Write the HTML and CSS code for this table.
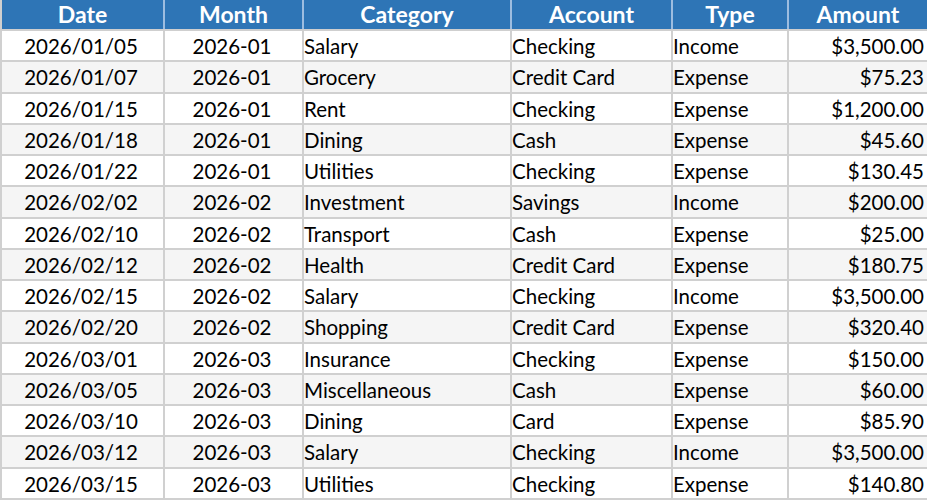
FILE: index.html
```html
<!DOCTYPE html>
<html>
<head>
<meta charset="utf-8">
<link rel="stylesheet" href="styles.css">
</head>
<body>
<table class="ledger">
  <colgroup>
    <col class="c-date"><col class="c-month"><col class="c-cat"><col class="c-acct"><col class="c-type"><col class="c-amt">
  </colgroup>
  <thead>
    <tr><th>Date</th><th>Month</th><th>Category</th><th>Account</th><th>Type</th><th>Amount</th></tr>
  </thead>
  <tbody>
    <tr><td class="ctr">2026/01/05</td><td class="ctr">2026-01</td><td>Salary</td><td>Checking</td><td>Income</td><td class="num">$3,500.00</td></tr>
    <tr><td class="ctr">2026/01/07</td><td class="ctr">2026-01</td><td>Grocery</td><td>Credit Card</td><td>Expense</td><td class="num">$75.23</td></tr>
    <tr><td class="ctr">2026/01/15</td><td class="ctr">2026-01</td><td>Rent</td><td>Checking</td><td>Expense</td><td class="num">$1,200.00</td></tr>
    <tr><td class="ctr">2026/01/18</td><td class="ctr">2026-01</td><td>Dining</td><td>Cash</td><td>Expense</td><td class="num">$45.60</td></tr>
    <tr><td class="ctr">2026/01/22</td><td class="ctr">2026-01</td><td>Utilities</td><td>Checking</td><td>Expense</td><td class="num">$130.45</td></tr>
    <tr><td class="ctr">2026/02/02</td><td class="ctr">2026-02</td><td>Investment</td><td>Savings</td><td>Income</td><td class="num">$200.00</td></tr>
    <tr><td class="ctr">2026/02/10</td><td class="ctr">2026-02</td><td>Transport</td><td>Cash</td><td>Expense</td><td class="num">$25.00</td></tr>
    <tr><td class="ctr">2026/02/12</td><td class="ctr">2026-02</td><td>Health</td><td>Credit Card</td><td>Expense</td><td class="num">$180.75</td></tr>
    <tr><td class="ctr">2026/02/15</td><td class="ctr">2026-02</td><td>Salary</td><td>Checking</td><td>Income</td><td class="num">$3,500.00</td></tr>
    <tr><td class="ctr">2026/02/20</td><td class="ctr">2026-02</td><td>Shopping</td><td>Credit Card</td><td>Expense</td><td class="num">$320.40</td></tr>
    <tr><td class="ctr">2026/03/01</td><td class="ctr">2026-03</td><td>Insurance</td><td>Checking</td><td>Expense</td><td class="num">$150.00</td></tr>
    <tr><td class="ctr">2026/03/05</td><td class="ctr">2026-03</td><td>Miscellaneous</td><td>Cash</td><td>Expense</td><td class="num">$60.00</td></tr>
    <tr><td class="ctr">2026/03/10</td><td class="ctr">2026-03</td><td>Dining</td><td>Card</td><td>Expense</td><td class="num">$85.90</td></tr>
    <tr><td class="ctr">2026/03/12</td><td class="ctr">2026-03</td><td>Salary</td><td>Checking</td><td>Income</td><td class="num">$3,500.00</td></tr>
    <tr><td class="ctr">2026/03/15</td><td class="ctr">2026-03</td><td>Utilities</td><td>Checking</td><td>Expense</td><td class="num">$140.80</td></tr>
  </tbody>
</table>
</body>
</html>
```
FILE: styles.css
```css
html, body {
  margin: 0;
  padding: 0;
  background: #ffffff;
}
.ledger {
  width: 927px;
  border-collapse: collapse;
  table-layout: fixed;
  font-family: Lato, "Liberation Sans", sans-serif;
  font-size: 20.5px;
  color: #000000;
}
.c-date { width: 163px; }
.c-month { width: 139px; }
.c-cat { width: 208px; }
.c-acct { width: 161px; }
.c-type { width: 116px; }
.c-amt { width: 140px; }
.ledger th {
  background: #2e75b6;
  color: #ffffff;
  font-weight: 700;
  font-size: 23px;
  height: 29px;
  padding: 0;
  text-align: center;
  border: 2px solid #cfcfcf;
  border-top: none;
  border-left-color: #9dbde0;
  border-right-color: #9dbde0;
  line-height: 29px;
}
.ledger th:first-child { border-left-color: #cfcfcf; }
.ledger th:last-child { border-right-color: #cfcfcf; }
.ledger td {
  height: 28.25px;
  padding: 1px 3px 0 0;
  border: 2px solid #d0d0d0;
  white-space: nowrap;
  line-height: 28px;
}
.ledger tbody tr:nth-child(even) td { background: #f5f5f5; }
.ledger td.ctr { text-align: center; }
.ledger td.num { text-align: right; }
```
